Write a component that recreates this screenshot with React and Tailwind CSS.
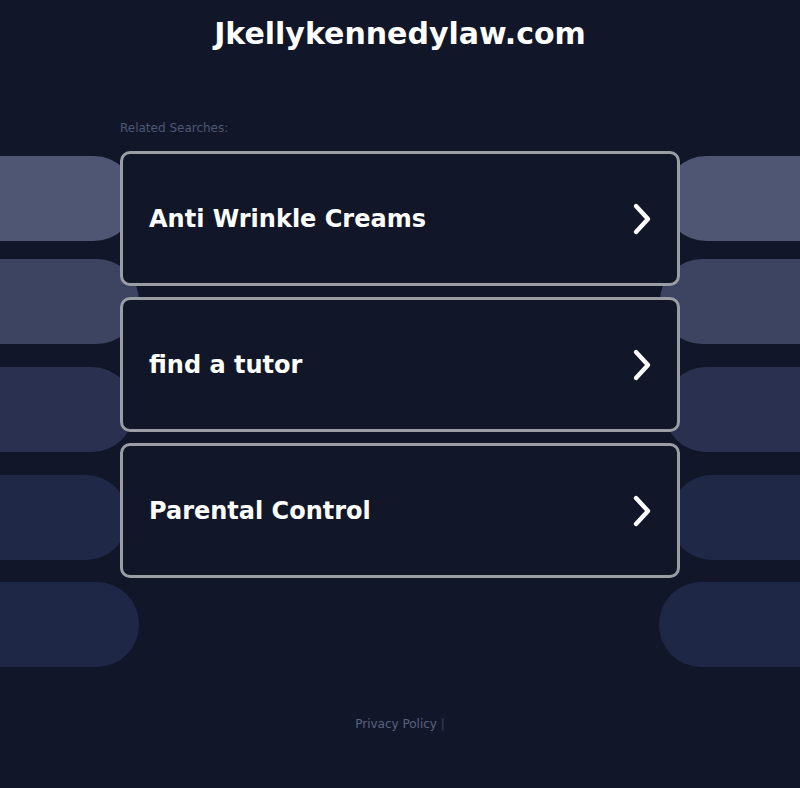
import React from "react";

const pills = [
  { mt: "mt-[156px]", l: "w-[136px]", r: "w-[136px]", c: "bg-[#4f5673]" },
  { mt: "mt-[18px]", l: "w-[139px]", r: "w-[140px]", c: "bg-[#3c4461]" },
  { mt: "mt-[23px]", l: "w-[134px]", r: "w-[136px]", c: "bg-[#2a3150]" },
  { mt: "mt-[23px]", l: "w-[128px]", r: "w-[130px]", c: "bg-[#1f2847]" },
  { mt: "mt-[22px]", l: "w-[139px]", r: "w-[141px]", c: "bg-[#1e2746]" },
];

const items = ["Anti Wrinkle Creams", "find a tutor", "Parental Control"];

function Chevron() {
  return (
    <svg width="24" height="34" viewBox="0 0 24 34" className="shrink-0">
      <polyline
        points="7,4 19,17 7,30"
        fill="none"
        stroke="#ffffff"
        strokeWidth="4.4"
        strokeLinecap="round"
        strokeLinejoin="round"
      />
    </svg>
  );
}

export default function App() {
  return (
    <div className="relative min-h-screen h-[788px] overflow-hidden bg-[#111729] font-['DejaVu_Sans',sans-serif]">
      <div className="absolute inset-0 flex flex-col" aria-hidden="true">
        {pills.map((p, i) => (
          <div key={i} className={`${p.mt} flex h-[85px] justify-between`}>
            <div className={`${p.l} ${p.c} h-full rounded-r-[42px]`} />
            <div className={`${p.r} ${p.c} h-full rounded-l-[42px]`} />
          </div>
        ))}
      </div>

      <div className="relative flex flex-col items-center">
        <h1 className="mt-[15px] text-[30px] leading-[38px] font-bold text-white">
          Jkellykennedylaw.com
        </h1>
        <div className="mt-[68px] w-[560px]">
          <div className="text-[12px] leading-[14px] text-[#4d5672]">Related Searches:</div>
          <div className="mt-[16px] flex flex-col gap-[11px]">
            {items.map((t) => (
              <div
                key={t}
                className="flex h-[135px] items-center justify-between rounded-[10px] border-[3px] border-[#9b9da4] bg-[#111729] pl-[26px] pr-[24px]"
              >
                <span className="text-[24px] font-bold text-white">{t}</span>
                <Chevron />
              </div>
            ))}
          </div>
        </div>
        <div className="mt-[139px] text-[12px] leading-[14px] text-[#5a6280]">
          Privacy Policy <span className="text-[#3a4260]">|</span>
        </div>
      </div>
    </div>
  );
}
